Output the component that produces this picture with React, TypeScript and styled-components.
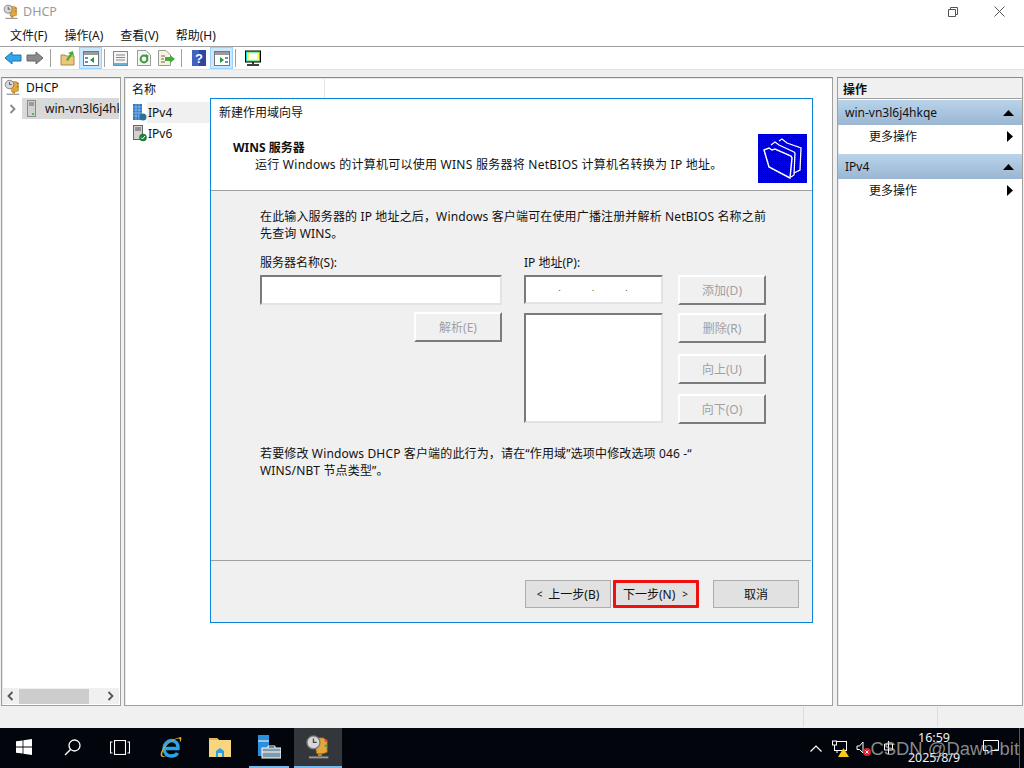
import React from "react";
import styled, { createGlobalStyle } from "styled-components";

const Global = createGlobalStyle`
  html, body { margin: 0; padding: 0; width: 1024px; height: 768px; overflow: hidden; background: #f0f0f0; }
  body { font-family: "Noto Sans", "Noto Sans CJK SC", sans-serif; font-size: 12px; color: #111; }
  * { box-sizing: border-box; }
`;

const Screen = styled.div`
  position: relative; width: 1024px; height: 768px; display: flex; flex-direction: column; overflow: hidden;
`;
const TitleBar = styled.div`
  height: 23px; background: #fff; display: flex; align-items: center; padding-left: 3px; color: #999; gap: 4px; font-size: 12.5px;
`;
const WinButtons = styled.div`margin-left: auto; display: flex; align-items: center; padding-right: 2px;`;
const WinButton = styled.div`width: 46px; height: 22px; display: flex; align-items: center; justify-content: center;`;
const MenuBar = styled.div`
  height: 24px; background: #fff; display: flex; align-items: center; padding-left: 10px; gap: 17px; border-bottom: 1px solid #a0a0a0;
`;
const ToolBar = styled.div`height: 22px; background: #fff; display: flex; align-items: center; padding-left: 2px;`;
const ToolIcon = styled.div<{ $on?: boolean; $w?: number }>`
  width: ${(p) => p.$w ?? 23}px; height: 22px; display: flex; align-items: center; justify-content: center;
  background: ${(p) => (p.$on ? "#cce8ff" : "transparent")};
  box-shadow: ${(p) => (p.$on ? "inset 0 0 0 1px #99d1ff" : "none")};
`;
const ToolSep = styled.div<{ $l: number; $r: number }>`
  width: 1px; height: 18px; background: #a0a0a0; margin: 0 ${(p) => p.$r}px 0 ${(p) => p.$l}px;
`;
const Band = styled.div`height: 8px; background: #f0f0f0; border-top: 1px solid #e0e0e0;`;
const Panels = styled.div`height: 629px; display: flex; padding-left: 1px; background: #f0f0f0;`;
const Panel = styled.div<{ $w: number; $ml?: number }>`
  width: ${(p) => p.$w}px; margin-left: ${(p) => p.$ml ?? 0}px; background: #fff;
  border: 1px solid #a0a0a0; border-top-color: #8a8a8a; box-shadow: inset 1px 1px 0 #e8e8e8; display: flex; flex-direction: column;
`;
const TreeRow = styled.div`display: flex; align-items: center; height: 21px; overflow: hidden; white-space: nowrap;`;
const TreeTop = styled(TreeRow)`padding-left: 2px; gap: 5px; height: 19px; margin-bottom: 1px;`;
const TreeSel = styled.div`
  display: flex; align-items: center; flex: none; width: 97px; height: 21px; background: #d9d9d9; padding-left: 5px; gap: 9px; overflow: hidden; white-space: nowrap;
  svg { flex: none; }
`;
const Chevron = styled.div`width: 20px; flex: none; display: flex; justify-content: center;`;
const ScrollBar = styled.div`
  margin: auto 1px 1px 1px; height: 16px; background: #f0f0f0; display: flex; align-items: center; justify-content: space-between; padding: 0 2px 0 0;
`;
const ScrollThumb = styled.div`width: 70px; height: 15px; background: #cdcdcd; margin-left: 2px; margin-right: auto;`;
const ScrollEnd = styled.div`width: 14px; display: flex; justify-content: center;`;
const ListHead = styled.div`height: 21px; display: flex; align-items: center;`;
const ListHeadCell = styled.div`width: 200px; height: 21px; padding: 2px 0 0 7px; border-right: 1px solid #e5e5e5;`;
const ListRow = styled.div<{ $mt?: number }>`
  height: 21px; display: flex; align-items: center; padding-left: 8px; margin-top: ${(p) => p.$mt ?? 0}px;
`;
const ListName = styled.div<{ $sel?: boolean }>`
  width: 120px; height: 21px; line-height: 21px; padding-left: 1px; background: ${(p) => (p.$sel ? "#f0f0f0" : "transparent")};
`;
const ActionHead = styled.div`
  height: 21px; background: #f0f0f0; font-weight: 700; padding: 2px 0 0 5px; border-bottom: 1px solid #a0a0a0; margin-bottom: 1px;
`;
const ActionSec = styled.div`
  height: 25px; background: linear-gradient(#b9d3ea, #9ab6d2); display: flex; align-items: center; justify-content: space-between; padding: 0 8px 0 7px;
`;
const ActionRow = styled.div`
  height: 22px; display: flex; align-items: center; justify-content: space-between; padding: 0 9px 0 31px; margin-bottom: 7px;
`;
const StatusBar = styled.div`height: 22px; background: #f0f0f0; display: flex; justify-content: flex-end;`;
const StatusCell = styled.div<{ $w: number }>`width: ${(p) => p.$w}px; height: 20px; margin-top: 1px; border-left: 1px solid #dcdcdc;`;
const TaskBar = styled.div`height: 40px; background: #02050c; display: flex; align-items: stretch; color: #fff;`;
const TaskBtn = styled.div<{ $w: number; $state?: "open" | "active"; $ml?: number; $mr?: number }>`
  width: ${(p) => p.$w}px; margin: 0 ${(p) => p.$mr ?? 0}px 0 ${(p) => p.$ml ?? 0}px;
  display: flex; align-items: center; justify-content: center; position: relative;
  background: ${(p) => (p.$state === "active" ? "#33363a" : "transparent")};
  border-bottom: 2px solid ${(p) => (p.$state ? "#76b9ed" : "transparent")};
`;
const Tray = styled.div`margin-left: auto; display: flex; align-items: center; position: relative; width: 230px; padding-left: 16px;`;
const TrayItem = styled.div<{ $mr: number }>`display: flex; margin-right: ${(p) => p.$mr}px;`;
const Clock = styled.div`
  position: absolute; left: 105px; top: 0; width: 70px; text-align: center; font-size: 12.5px; line-height: 20px; color: #f2f2f2;
`;
const Watermark = styled.div`
  position: absolute; right: 5px; top: 9px; font-size: 18.4px; line-height: 24px; color: rgba(190,190,190,0.72); white-space: nowrap; font-family: "Liberation Sans", sans-serif;
`;
const NotifyIcon = styled.div`position: absolute; left: 189px; top: 12px;`;
const DesktopEdge = styled.div`position: absolute; right: 4px; top: 0; width: 1px; height: 40px; background: #555;`;

/* Dialog */
const Dialog = styled.div`
  position: absolute; left: 210px; top: 98px; width: 603px; height: 525px; background: #f0f0f0; border: 1px solid #0a84d8; display: flex; flex-direction: column;
`;
const DlgHeader = styled.div`
  height: 92px; background: #fff; border-bottom: 1px solid #a0a0a0; display: grid; grid-template-columns: 1fr 49px; column-gap: 6px; padding-right: 5px;
`;
const DlgTitle = styled.div`padding: 6px 0 0 8px; height: 22px; line-height: 16px;`;
const DlgHeadTexts = styled.div`display: flex; flex-direction: column;`;
const DlgH1 = styled.div`font-weight: 700; margin: 18px 0 0 22px; line-height: 17px;`;
const DlgH2 = styled.div`margin-left: 44px; line-height: 18px; letter-spacing: 0.25px;`;
const DlgIcon = styled.div`
  margin-top: 35px; width: 49px; height: 49px; display: flex;
  background: conic-gradient(#000010 25%, #0000e6 0) 0 0 / 2px 2px;
`;
const DlgBody = styled.div`flex: 1; padding: 17px 46px 0 49px; position: relative;`;
const Para = styled.p`margin: 0; line-height: 17px; letter-spacing: 0.15px; width: 520px;`;
const FormGrid = styled.div`
  display: grid; grid-template-columns: 242px 161px 103px; margin-top: 12px;
`;
const ColA = styled.div`display: flex; flex-direction: column; width: 242px;`;
const ColB = styled.div`display: flex; flex-direction: column; margin-left: 22px; width: 139px;`;
const ColC = styled.div`display: flex; flex-direction: column; margin-left: 15px; width: 88px; padding-top: 21px;`;
const Lbl = styled.div`height: 21px; line-height: 17px; white-space: nowrap;`;
const Sunken = styled.div<{ $h: number }>`
  height: ${(p) => p.$h}px; width: 100%; background: #fff;
  border: 2px solid; border-color: #7a7a7a #e3e3e3 #e3e3e3 #7a7a7a;
`;
const IpField = styled(Sunken)`display: flex; justify-content: space-around; padding: 8px 33px 0 32px; font-size: 8px; line-height: 5px; color: #333; margin-bottom: 9px; gap: 30px;`;
const Raised = styled.div<{ $mt?: number; $self?: boolean }>`
  height: 30px; width: 88px; margin-top: ${(p) => p.$mt ?? 0}px; ${(p) => (p.$self ? "align-self: flex-end;" : "")}
  background: #f0f0f0; color: #a0a0a0; display: flex; align-items: center; justify-content: center;
  border: 2px solid; border-color: #fff #7c7c7c #7c7c7c #fff;
`;
const Para2 = styled(Para)`position: absolute; left: 49px; top: 254px;`;
const DlgFooter = styled.div`
  height: 62px; border-top: 1px solid #a0a0a0; margin-right: 1px; display: flex; align-items: flex-start; padding: 19px 0 0 314px; flex: none;
`;
const PushBtn = styled.div<{ $ml?: number }>`
  width: 86px; height: 28px; margin-left: ${(p) => p.$ml ?? 0}px; background: #e1e1e1; border: 1px solid #adadad;
  display: flex; align-items: center; justify-content: center; gap: 6px; white-space: pre;
`;
const NextBtn = styled(PushBtn)`
  border: 3px solid #f01010; border-radius: 1px; gap: 7px; padding-right: 1px;
`;
const Angle = styled.span`font-size: 10px;`;

const Back = ({ c, c2 }: { c: string; c2: string }) => (
  <svg width="18" height="14" viewBox="0 0 18 14"><path d="M1 7 L8 1 V4 H17 V10 H8 V13 Z" fill={c} stroke={c2} strokeWidth="1" /></svg>
);
const Fwd = () => (
  <svg width="18" height="14" viewBox="0 0 18 14"><path d="M17 7 L10 1 V4 H1 V10 H10 V13 Z" fill="#8a8a8a" stroke="#666" strokeWidth="1" /></svg>
);
const PaneIcon = ({ flip }: { flip?: boolean }) => (
  <svg width="16" height="15" viewBox="0 0 16 15">
    <rect x=".5" y=".5" width="15" height="14" fill="#fff" stroke="#777" />
    <rect x="1" y="1" width="14" height="3" fill="#9a9a9a" />
    <path d={flip ? "M6 6v6l4-3z" : "M11 6v6l-4-3z"} fill="#1e9b3c" />
    <path d={flip ? "M11 6h3v2h-3zM11 10h3v2h-3z" : "M2 6h3v2H2zM2 10h3v2H2z"} fill="#6a8db5" />
  </svg>
);
const DocIcon = () => (
  <svg width="15" height="15" viewBox="0 0 15 15"><rect x=".5" y=".5" width="14" height="14" fill="#f4f4f4" stroke="#888" /><rect x="1" y="12" width="13" height="2" fill="#6cb0de" /><path d="M3 4h9M3 6.5h9M3 9h9" stroke="#888" /></svg>
);
const RefreshIcon = () => (
  <svg width="14" height="16" viewBox="0 0 14 16"><path d="M.5.5H9L13.500 5v10.500H.5z" fill="#f6f6f6" stroke="#999" /><circle cx="7" cy="9" r="3.400" fill="none" stroke="#3d9a3f" strokeWidth="2" /><path d="M9 4l3 2-3 2z" fill="#3d9a3f" /></svg>
);
const ExportIcon = () => (
  <svg width="17" height="16" viewBox="0 0 17 16"><path d="M.5.5H8L12.500 5v10.500H.5z" fill="#f7f3dc" stroke="#999" /><path d="M3 6h4M3 9h3M3 12h4" stroke="#666" /><path d="M7 7h5V5l5 4-5 4v-2H7z" fill="#48a83c" /></svg>
);
const FolderUp = () => (
  <svg width="16" height="16" viewBox="0 0 16 16"><path d="M1 5h4l1 1h8v9H1z" fill="#e9c878" stroke="#a88a48" /><path d="M6 10 10 4 8 3l5-2 1 5-2-1-4 6z" fill="#4aa83c" /></svg>
);
const Help = () => (
  <svg width="14" height="16" viewBox="0 0 14 16"><rect width="14" height="16" fill="#2b47a5" /><rect width="7" height="16" fill="#4062c0" /><text x="7" y="13" textAnchor="middle" fontSize="13" fontWeight="700" fill="#fff" fontFamily="Liberation Sans">?</text></svg>
);
const Monitor = () => (
  <svg width="18" height="16" viewBox="0 0 18 16"><rect x="1" y="0.500" width="16" height="12" fill="#000" /><rect x="2.500" y="2" width="13" height="9" fill="#ffff40" stroke="#10e0e0" /><rect x="5" y="3.500" width="8" height="6" fill="#fff" /><path d="M9 12v2M3 15h12" stroke="#000" strokeWidth="1.500" /></svg>
);
const DhcpIcon = ({ s = 16 }: { s?: number }) => (
  <svg width={s} height={s} viewBox="0 0 20 20">
    <path d="M7 3h7l3 2v9l-3 1H9z" fill="#e3a63c" stroke="#a96f1d" strokeWidth=".6" />
    <circle cx="6.500" cy="6.500" r="5" fill="#d8d8d8" stroke="#777" />
    <path d="M6.500 3.500v3h2.500" stroke="#444" fill="none" />
    <path d="M10 15h3v2h-3z" fill="#c97f1a" />
    <path d="M3 18h15" stroke="#999" strokeWidth="1.500" />
    <circle cx="16" cy="5" r="1" fill="#d44" /><circle cx="16" cy="9" r="1" fill="#4a4" />
  </svg>
);
const ServerIcon = () => (
  <svg width="9" height="17" viewBox="0 0 9 17"><rect x=".5" y=".5" width="8" height="16" fill="#d0d0d0" stroke="#8a8a8a" /><path d="M2 3h5M2 5h5" stroke="#666" /><rect x="5" y="13" width="2" height="2" fill="#3cc83c" /></svg>
);
const Ipv4Icon = () => (
  <svg width="14" height="17" viewBox="0 0 14 17"><rect x="0" y="0" width="9" height="16" fill="#2a78c8" /><path d="M0 3h9M0 6h9M0 9h9M0 12h9M3 0v16M6 0v16" stroke="#9cc6ee" strokeWidth=".7" /><circle cx="10" cy="13" r="3.500" fill="#2a6f9a" /></svg>
);
const Ipv6Icon = () => (
  <svg width="14" height="17" viewBox="0 0 14 17"><rect x=".5" y=".5" width="9" height="14" fill="#d2d2d2" stroke="#666" /><path d="M2 3h6M2 5h6" stroke="#555" /><circle cx="10" cy="12.500" r="3.800" fill="#1d7f3a" /><path d="M8 12.500l1.500 1.500 2.500-3" stroke="#fff" fill="none" /></svg>
);
const UpTri = () => <svg width="11" height="6" viewBox="0 0 11 6"><path d="M5.500 0 11 6H0z" fill="#000" /></svg>;
const RightTri = () => <svg width="6" height="11" viewBox="0 0 6 11"><path d="M0 0l6 5.500L0 11z" fill="#000" /></svg>;
const Chev = ({ left, color = "#888" }: { left?: boolean; color?: string }) => (
  <svg width="7" height="10" viewBox="0 0 7 10"><path d={left ? "M5.500 1 1.500 5l4 4" : "M1.500 1l4 4-4 4"} fill="none" stroke={color} strokeWidth="1.800" /></svg>
);
const FoldersIcon = () => (
  <svg width="49" height="49" viewBox="0 0 49 49" fill="none" stroke="#fff" strokeWidth="1.300">
    <path d="M21 7l3-2 5 4 14 5-1 22-6 3" />
    <path d="M13 11l4-3 4 3 15 7 1 1-1 22-3 2" />
    <path d="M6 16l5-2 3 2 3-1 16 7 1 2-2 20L11 33z" strokeWidth="1.500" />
  </svg>
);
const WinLogo = () => (
  <svg width="16" height="16" viewBox="0 0 16 16"><path d="M0 2.300 6.600 1.400V7.600H0zM7.400 1.300 16 0V7.600H7.400zM0 8.400H6.600V14.600L0 13.700zM7.400 8.400H16V16L7.400 14.700z" fill="#fff" /></svg>
);
const SearchI = () => (
  <svg width="17" height="17" viewBox="0 0 17 17"><circle cx="10.500" cy="6.500" r="5.500" fill="none" stroke="#fff" strokeWidth="1.300" /><path d="M6.500 10.500 1 16" stroke="#fff" strokeWidth="1.500" /></svg>
);
const TaskView = () => (
  <svg width="20" height="15" viewBox="0 0 20 15" fill="none" stroke="#fff" strokeWidth="1.100"><rect x="4.500" y=".5" width="11" height="14" /><path d="M2.500 2H.5v11h2M17.500 2h2v11h-2" /></svg>
);
const IeIcon = () => (
  <svg width="24" height="24" viewBox="0 0 24 24" fill="none">
    <path d="M6 13.500h13c.5-5-2.500-8-6.500-8S5 9 5 13.500s3 7.500 7.500 7.500c3 0 5-1 6-3" stroke="#2aa4e8" strokeWidth="3.400" />
    <path d="M2 21C0 16 10 4 22 2c1 2 0 4-1.500 6 1-3 .5-5-1.500-4.500C11 5 2 15 3.500 20.500c.5 1 3 1 5-1-2 3-5.500 3-6.500 1.500z" fill="#e8b020" />
  </svg>
);
const FolderI = () => (
  <svg width="22" height="20" viewBox="0 0 22 20"><path d="M0 1h8l2 2h12v17H0z" fill="#f6d67e" /><path d="M0 1h8l2 2H0z" fill="#e6b84c" /><path d="M7 20v-6l4-3 4 3v6h-2v-4H9v4z" fill="#2aa0e4" /></svg>
);
const ServerMgr = () => (
  <svg width="24" height="24" viewBox="0 0 24 24"><rect x="1" y="0" width="11" height="21" fill="#2b8fdc" /><path d="M1 6h11" stroke="#fff" /><rect x="5" y="13" width="19" height="10" fill="#7f9bb0" stroke="#fff" /><path d="M11 13v-2h7v2" fill="none" stroke="#fff" /><path d="M5 17h19" stroke="#fff" /></svg>
);
const CaretUp = () => (
  <svg width="12" height="7" viewBox="0 0 12 7"><path d="M.5 6.500 6 1l5.500 5.500" fill="none" stroke="#fff" strokeWidth="1.200" /></svg>
);
const Flag = () => (
  <svg width="17" height="17" viewBox="0 0 17 17"><rect x="2.500" y="1.500" width="12" height="9" fill="none" stroke="#fff" /><rect x=".5" y="1" width="4" height="4" fill="#02050c" stroke="#fff" /><path d="M5 10v3" stroke="#fff" /><path d="M11.500 8 17 17H6z" fill="#f8c81c" /></svg>
);
const Speaker = () => (
  <svg width="17" height="17" viewBox="0 0 17 17"><path d="M1 6h2.500L7 2v11L3.500 9.500H1z" fill="none" stroke="#fff" /><circle cx="11" cy="12" r="4" fill="#e0202c" /><path d="M9.500 10.500l3 3M12.500 10.500l-3 3" stroke="#fff" /></svg>
);
const Ime = () => (
  <svg width="14" height="14" viewBox="0 0 14 14"><path d="M6.500 0v13M2.500 3h8v6h-8z" fill="none" stroke="#fff" /></svg>
);
const Notify = () => (
  <svg width="16" height="15" viewBox="0 0 16 15"><path d="M.5.500h15v10H8l-3 3v-3H.5z" fill="none" stroke="#fff" /></svg>
);

export default function App() {
  return (
    <Screen>
      <Global />
      <TitleBar>
        <DhcpIcon />
        <span>DHCP</span>
        <WinButtons>
          <WinButton />
          <WinButton>
            <svg width="10" height="10" viewBox="0 0 10 10" fill="none" stroke="#555"><path d="M.5 2.500h7v7h-7zM2.500 2.500v-2h7v7h-2" /></svg>
          </WinButton>
          <WinButton>
            <svg width="11" height="11" viewBox="0 0 11 11" stroke="#555"><path d="M.5.500l10 10M10.500.500l-10 10" /></svg>
          </WinButton>
        </WinButtons>
      </TitleBar>
      <MenuBar>
        <span>文件(F)</span><span>操作(A)</span><span>查看(V)</span><span>帮助(H)</span>
      </MenuBar>
      <ToolBar>
        <ToolIcon $w={22}><Back c="#35a5ea" c2="#1d74b8" /></ToolIcon>
        <ToolIcon $w={22}><Fwd /></ToolIcon>
        <ToolSep $l={4} $r={5} />
        <ToolIcon><FolderUp /></ToolIcon>
        <ToolIcon $on><PaneIcon /></ToolIcon>
        <ToolSep $l={2} $r={4} />
        <ToolIcon><DocIcon /></ToolIcon>
        <ToolIcon><RefreshIcon /></ToolIcon>
        <ToolIcon><ExportIcon /></ToolIcon>
        <ToolSep $l={3} $r={5} />
        <ToolIcon><Help /></ToolIcon>
        <ToolIcon $on><PaneIcon flip /></ToolIcon>
        <ToolSep $l={2} $r={5} />
        <ToolIcon><Monitor /></ToolIcon>
      </ToolBar>
      <Band />
      <Panels>
        <Panel $w={120}>
          <TreeTop><DhcpIcon s={17} /><span>DHCP</span></TreeTop>
          <TreeRow>
            <Chevron><Chev /></Chevron>
            <TreeSel><ServerIcon /><span>win-vn3l6j4hkqe</span></TreeSel>
          </TreeRow>
          <ScrollBar>
            <ScrollEnd><Chev left color="#555" /></ScrollEnd>
            <ScrollThumb />
            <ScrollEnd><Chev color="#555" /></ScrollEnd>
          </ScrollBar>
        </Panel>
        <Panel $w={709} $ml={3}>
          <ListHead><ListHeadCell>名称</ListHeadCell></ListHead>
          <ListRow $mt={3}><Ipv4Icon /><ListName $sel>IPv4</ListName></ListRow>
          <ListRow><Ipv6Icon /><ListName>IPv6</ListName></ListRow>
        </Panel>
        <Panel $w={186} $ml={4}>
          <ActionHead>操作</ActionHead>
          <ActionSec><span>win-vn3l6j4hkqe</span><UpTri /></ActionSec>
          <ActionRow><span>更多操作</span><RightTri /></ActionRow>
          <ActionSec><span>IPv4</span><UpTri /></ActionSec>
          <ActionRow><span>更多操作</span><RightTri /></ActionRow>
        </Panel>
      </Panels>
      <StatusBar>
        <StatusCell $w={134} />
        <StatusCell $w={87} />
      </StatusBar>
      <TaskBar>
        <TaskBtn $w={48}><WinLogo /></TaskBtn>
        <TaskBtn $w={48}><SearchI /></TaskBtn>
        <TaskBtn $w={48}><TaskView /></TaskBtn>
        <TaskBtn $w={54}><IeIcon /></TaskBtn>
        <TaskBtn $w={43}><FolderI /></TaskBtn>
        <TaskBtn $w={40} $ml={8} $mr={5} $state="open"><ServerMgr /></TaskBtn>
        <TaskBtn $w={48} $state="active"><DhcpIcon s={26} /></TaskBtn>
        <Tray>
          <TrayItem $mr={10}><CaretUp /></TrayItem>
          <TrayItem $mr={7}><Flag /></TrayItem>
          <TrayItem $mr={9}><Speaker /></TrayItem>
          <TrayItem $mr={0}><Ime /></TrayItem>
          <Clock>16:59<br />2025/8/9</Clock>
          <NotifyIcon><Notify /></NotifyIcon>
          <Watermark>CSDN @Dawn-bit</Watermark>
          <DesktopEdge />
        </Tray>
      </TaskBar>

      <Dialog>
        <DlgHeader>
          <DlgHeadTexts>
            <DlgTitle>新建作用域向导</DlgTitle>
            <DlgH1>WINS 服务器</DlgH1>
            <DlgH2>运行 Windows 的计算机可以使用 WINS 服务器将 NetBIOS 计算机名转换为 IP 地址。</DlgH2>
          </DlgHeadTexts>
          <DlgIcon><FoldersIcon /></DlgIcon>
        </DlgHeader>
        <DlgBody>
          <Para>在此输入服务器的 IP 地址之后，Windows 客户端可在使用广播注册并解析 NetBIOS 名称之前<br />先查询 WINS。</Para>
          <FormGrid>
            <ColA>
              <Lbl>服务器名称(S):</Lbl>
              <Sunken $h={30} />
              <Raised $mt={7} $self>解析(E)</Raised>
            </ColA>
            <ColB>
              <Lbl>IP 地址(P):</Lbl>
              <IpField $h={29}><span>.</span><span>.</span><span>.</span></IpField>
              <Sunken $h={110} />
            </ColB>
            <ColC>
              <Raised>添加(D)</Raised>
              <Raised $mt={8}>删除(R)</Raised>
              <Raised $mt={11}>向上(U)</Raised>
              <Raised $mt={10}>向下(O)</Raised>
            </ColC>
          </FormGrid>
          <Para2>若要修改 Windows DHCP 客户端的此行为，请在“作用域”选项中修改选项 046 -“<br />WINS/NBT 节点类型”。</Para2>
        </DlgBody>
        <DlgFooter>
          <PushBtn><Angle>{"<"}</Angle><span>上一步(B)</span></PushBtn>
          <NextBtn $ml={2}><span>下一步(N)</span><Angle>{">"}</Angle></NextBtn>
          <PushBtn $ml={14}>取消</PushBtn>
        </DlgFooter>
      </Dialog>
    </Screen>
  );
}
